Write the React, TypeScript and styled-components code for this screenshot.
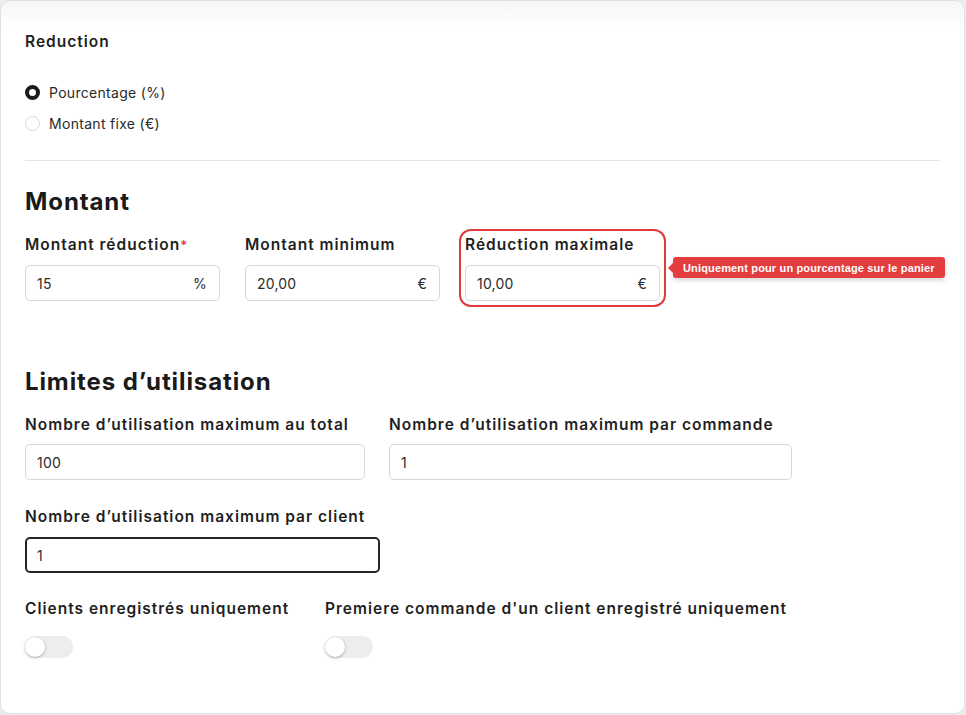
import { createGlobalStyle, styled } from "styled-components";

const GlobalStyle = createGlobalStyle`
  html, body {
    margin: 0;
    padding: 0;
    background: #ececec;
  }
  * {
    box-sizing: border-box;
  }
  body {
    font-family: Inter, "Noto Sans", sans-serif;
    color: #1c1c1c;
  }
`;

interface InputFieldProps {
  label: string;
  value: string;
  suffix?: string;
  width: number;
  gap?: number;
  required?: boolean;
  focused?: boolean;
}

function InputField({ label, value, suffix, width, gap = 10, required, focused }: InputFieldProps) {
  return (
    <Field $width={width} $gap={gap}>
      <Label>
        {label}
        {required && <Star>*</Star>}
      </Label>
      <InputBox $focused={focused}>
        <span>{value}</span>
        {suffix && <Suffix>{suffix}</Suffix>}
      </InputBox>
    </Field>
  );
}

export default function App() {
  return (
    <>
      <GlobalStyle />
      <Card>
        <Section>
          <Label>Reduction</Label>
          <RadioList>
            <RadioRow>
              <Radio $checked />
              <span>Pourcentage (%)</span>
            </RadioRow>
            <RadioRow>
              <Radio />
              <span>Montant fixe (€)</span>
            </RadioRow>
          </RadioList>
        </Section>

        <Divider />

        <Heading $top={26}>Montant</Heading>
        <FieldRow $gap={25}>
          <InputField label="Montant réduction" value="15" suffix="%" width={195} required />
          <InputField label="Montant minimum" value="20,00" suffix="€" width={195} />
          <Highlight>
            <InputField label="Réduction maximale" value="10,00" suffix="€" width={195} />
            <Tooltip>Uniquement pour un pourcentage sur le panier</Tooltip>
          </Highlight>
        </FieldRow>

        <Heading $top={66}>Limites d’utilisation</Heading>
        <FieldRow $gap={24}>
          <InputField label="Nombre d’utilisation maximum au total" value="100" width={340} gap={9} />
          <InputField label="Nombre d’utilisation maximum par commande" value="1" width={403} gap={9} />
        </FieldRow>
        <FieldRow $gap={24} $top={27}>
          <InputField label="Nombre d’utilisation maximum par client" value="1" width={355} gap={10} focused />
        </FieldRow>

        <FieldRow $gap={0} $top={26}>
          <ToggleField $width={300}>
            <Label>Clients enregistrés uniquement</Label>
            <Toggle />
          </ToggleField>
          <ToggleField>
            <Label>Premiere commande d'un client enregistré uniquement</Label>
            <Toggle />
          </ToggleField>
        </FieldRow>
      </Card>
    </>
  );
}

const Card = styled.div`
  height: 714px;
  width: 965px;
  background: linear-gradient(to bottom, #f6f6f6 0px, #ffffff 26px);
  border: 1px solid #e0e0e0;
  border-radius: 10px;
  padding: 31px 24px 0 24px;
`;

const Section = styled.div`
  display: flex;
  flex-direction: column;
`;

const Label = styled.div`
  font-size: 15.5px;
  line-height: 20px;
  font-weight: 600;
  letter-spacing: 1px;
  color: #1f1f1f;
  white-space: nowrap;
`;

const Star = styled.span`
  color: #e23c3c;
  margin-left: 0;
  font-size: 13px;
  vertical-align: top;
`;

const RadioList = styled.div`
  display: flex;
  flex-direction: column;
  gap: 7px;
  margin-top: 28px;
`;

const RadioRow = styled.label`
  display: flex;
  align-items: center;
  gap: 9px;
  height: 24px;
  font-size: 14px;
  letter-spacing: 0.3px;
  color: #2a2a2a;
`;

const Radio = styled.span<{ $checked?: boolean }>`
  width: 15px;
  height: 15px;
  border-radius: 50%;
  background: #fff;
  border: ${(p) => (p.$checked ? "4px solid #1a1a1a" : "1px solid #d8d8d8")};
`;

const Divider = styled.hr`
  border: none;
  border-top: 1px solid #e4e4e4;
  margin: 25px 0 0 0;
`;

const Heading = styled.h2<{ $top?: number }>`
  margin: ${(p) => p.$top ?? 25}px 0 18px 0;
  font-size: 24px;
  line-height: 30px;
  font-weight: 700;
  letter-spacing: 0.9px;
  color: #1a1a1a;
`;

const FieldRow = styled.div<{ $gap: number; $top?: number }>`
  display: flex;
  align-items: flex-start;
  gap: ${(p) => p.$gap}px;
  margin-top: ${(p) => p.$top ?? 0}px;
`;

const Field = styled.div<{ $width: number; $gap: number }>`
  display: flex;
  flex-direction: column;
  gap: ${(p) => p.$gap}px;
  width: ${(p) => p.$width}px;
`;

const InputBox = styled.div<{ $focused?: boolean }>`
  display: flex;
  align-items: center;
  justify-content: space-between;
  height: 36px;
  padding: 0 12px 0 ${(p) => (p.$focused ? 10 : 11)}px;
  border: ${(p) => (p.$focused ? "2px solid #262626" : "1px solid #d6d6d6")};
  border-radius: 5px;
  background: #fff;
  font-size: 14px;
  letter-spacing: 0.2px;
  color: #2b2b2b;
`;

const Suffix = styled.span`
  color: #2b2b2b;
`;

const Highlight = styled.div`
  position: relative;
  outline: 2px solid #e03b3b;
  outline-offset: 4px;
  border-radius: 6px;
`;

const Tooltip = styled.div`
  position: absolute;
  left: calc(100% + 13px);
  top: 22px;
  height: 21px;
  padding: 0 10px;
  display: flex;
  align-items: center;
  white-space: nowrap;
  background: #e33d3f;
  color: #fff;
  border-radius: 3px;
  font-family: "Liberation Sans", Arial, sans-serif;
  font-size: 11px;
  font-weight: 700;
  letter-spacing: 0.15px;
  box-shadow: 0 2px 5px rgba(0, 0, 0, 0.18);

  &::before {
    content: "";
    position: absolute;
    left: -5px;
    top: 50%;
    margin-top: -5px;
    border-style: solid;
    border-width: 5px 5px 5px 0;
    border-color: transparent #e33d3f transparent transparent;
  }
`;

const ToggleField = styled.div<{ $width?: number }>`
  display: flex;
  flex-direction: column;
  gap: 17px;
  width: ${(p) => (p.$width ? `${p.$width}px` : "auto")};
`;

const Toggle = styled.span`
  position: relative;
  display: block;
  width: 48px;
  height: 22px;
  border-radius: 11px;
  background: #ededed;

  &::after {
    content: "";
    position: absolute;
    left: 0;
    top: 1px;
    width: 20px;
    height: 20px;
    border-radius: 50%;
    background: #fff;
    box-shadow: 0 1px 3px rgba(0, 0, 0, 0.3);
  }
`;
